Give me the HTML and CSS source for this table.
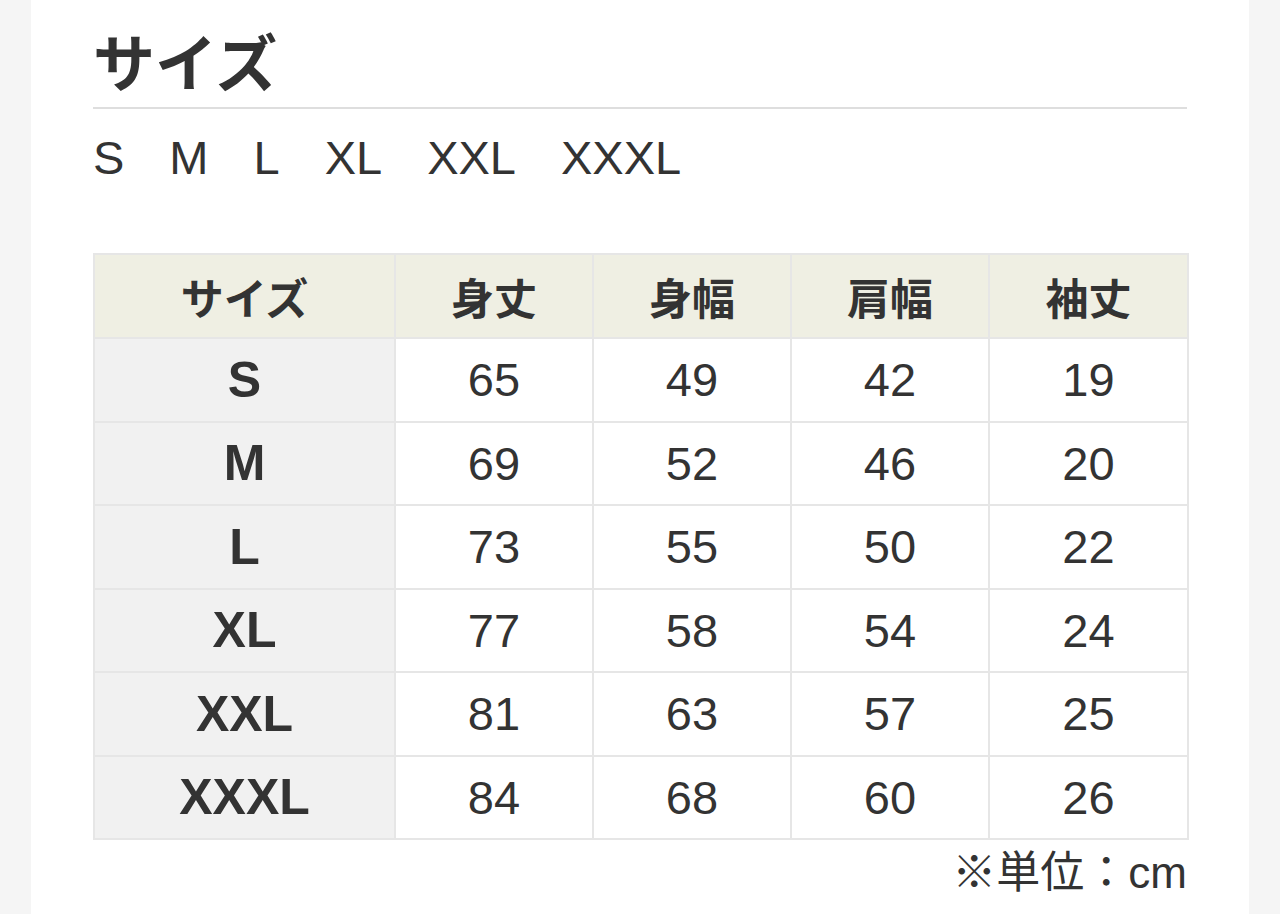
FILE: index.html
```html
<!DOCTYPE html>
<html lang="ja">
<head>
<meta charset="utf-8">
<title>サイズ</title>
<link rel="stylesheet" href="styles.css">
</head>
<body>
<main class="panel">
  <h2 class="title">サイズ</h2>
  <ul class="size-list">
    <li>S</li><li>M</li><li>L</li><li>XL</li><li>XXL</li><li>XXXL</li>
  </ul>
  <table class="size-table">
    <colgroup>
      <col class="c-first"><col class="c-n"><col class="c-n"><col class="c-n"><col class="c-last">
    </colgroup>
    <thead>
      <tr><th>サイズ</th><th>身丈</th><th>身幅</th><th>肩幅</th><th>袖丈</th></tr>
    </thead>
    <tbody>
      <tr><th>S</th><td>65</td><td>49</td><td>42</td><td>19</td></tr>
      <tr><th>M</th><td>69</td><td>52</td><td>46</td><td>20</td></tr>
      <tr><th>L</th><td>73</td><td>55</td><td>50</td><td>22</td></tr>
      <tr><th>XL</th><td>77</td><td>58</td><td>54</td><td>24</td></tr>
      <tr><th>XXL</th><td>81</td><td>63</td><td>57</td><td>25</td></tr>
      <tr><th>XXXL</th><td>84</td><td>68</td><td>60</td><td>26</td></tr>
    </tbody>
  </table>
  <p class="note">※単位：cm</p>
</main>
</body>
</html>
```

FILE: styles.css
```css
html, body {
  margin: 0;
  padding: 0;
  background: #f5f5f5;
}
body {
  font-family: "Liberation Sans", "Noto Sans CJK JP", sans-serif;
  color: #333;
}
.panel {
  margin-left: 31px;
  width: 1218px;
  min-height: 914px;
  box-sizing: border-box;
  padding: 0 62px;
  background: #fff;
  overflow: hidden;
}
.title {
  margin: 0;
  padding-top: 29px;
  padding-bottom: 16px;
  font-family: "Noto Sans CJK JP", sans-serif;
  font-size: 62px;
  line-height: 62px;
  font-weight: 700;
  border-bottom: 2px solid #dedede;
}
.size-list {
  list-style: none;
  margin: 22px 0 0;
  padding: 0;
  display: flex;
  gap: 45px;
  font-size: 47px;
  line-height: 53px;
}
.size-table {
  margin-top: 69px;
  width: 1094px;
  border-collapse: collapse;
  table-layout: fixed;
  border: 2px solid #e6e6e6;
}
.c-first { width: 301px; }
.c-n { width: 198px; }
.c-last { width: 199px; }
.size-table th,
.size-table td {
  border: 2px solid #e6e6e6;
  text-align: center;
  vertical-align: middle;
  padding: 0;
}
.size-table thead tr { height: 84px; }
.size-table tbody tr { height: 83.5px; }
.size-table thead th {
  background: #efefe3;
  font-family: "Noto Sans CJK JP", sans-serif;
  font-size: 43px;
  font-weight: 700;
}
.size-table tbody th {
  background: #f1f1f1;
  font-size: 50px;
  font-weight: 700;
}
.size-table td {
  font-size: 47px;
  font-weight: 400;
}
.note {
  margin: 11px 0 0;
  text-align: right;
  font-size: 44px;
  line-height: 44px;
}
```
